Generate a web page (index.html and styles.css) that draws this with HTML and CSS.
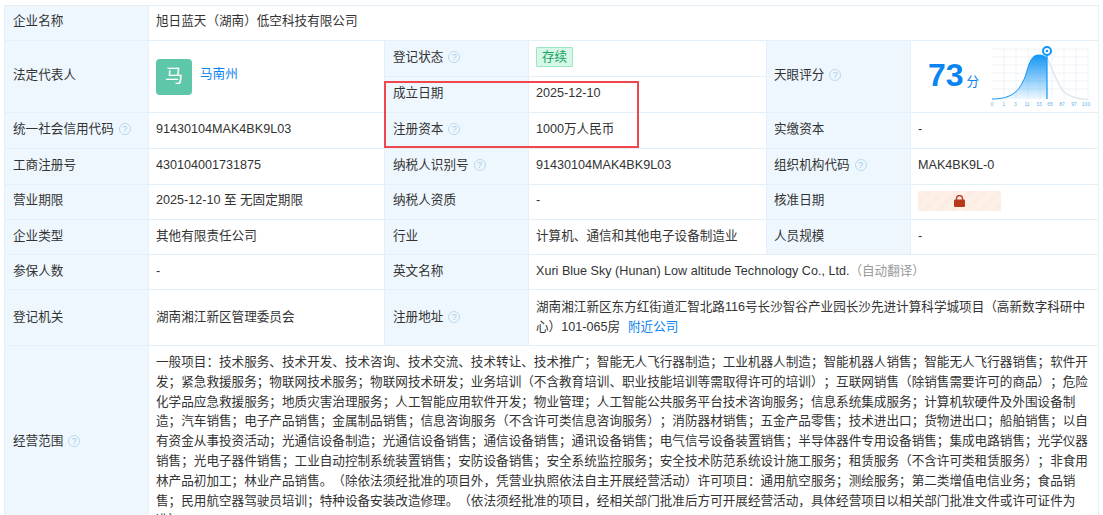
FILE: index.html
```html
<!DOCTYPE html>
<html lang="zh-CN">
<head>
<meta charset="utf-8">
<title>企业信息</title>
<link rel="stylesheet" href="styles.css">
</head>
<body>
<div class="wrap">
<table class="info">
<colgroup>
<col class="c-label"><col class="c-v1"><col class="c-label"><col class="c-v2"><col class="c-label"><col class="c-v3">
</colgroup>
<tbody>
<tr class="r35">
  <th>企业名称</th>
  <td colspan="5">旭日蓝天（湖南）低空科技有限公司</td>
</tr>
<tr class="r36">
  <th rowspan="2">法定代表人</th>
  <td rowspan="2">
    <div class="person"><span class="avatar">马</span><a class="link name" href="#">马南州</a></div>
  </td>
  <th>登记状态<i class="help">?</i></th>
  <td><span class="tag">存续</span></td>
  <th rowspan="2" class="l3">天眼评分<i class="help">?</i></th>
  <td rowspan="2" class="score-cell">
    <div class="score">
      <span class="num">73</span><span class="unit">分</span>
      <svg class="chart" width="106" height="68" viewBox="0 0 106 68">
        <defs>
          <linearGradient id="fill" x1="0" y1="0" x2="0" y2="1">
            <stop offset="0" stop-color="#1296f5"/>
            <stop offset="1" stop-color="#1296f5" stop-opacity="0.06"/>
          </linearGradient>
        </defs>
        <g class="grid">
          <path d="M4 8H100M4 16H100M4 24H100M4 32H100M4 40H100M4 48H100"/>
          <path d="M16 8V58M28 8V58M40 8V58M52 8V58M64 8V58M76 8V58M88 8V58M100 8V58"/>
        </g>
        <path d="M59 17C62 22 66 36 75 50C80 55 88 58 100 58.500" fill="none" stroke="#dfe8ee" stroke-width="1.500"/>
        <path d="M4 58C14 58 20 56 25 53C31 49 34 43 37 36C40 28 42 14 50 14C54 14 57 15 59 17V58Z" fill="url(#fill)"/>
        <path d="M4 58C14 58 20 56 25 53C31 49 34 43 37 36C40 28 42 14 50 14C54 14 57 15 59 17" fill="none" stroke="#1296f5" stroke-width="1"/>
        <path d="M59 12V58" stroke="#1296f5" stroke-width="1.200"/>
        <circle cx="59" cy="10" r="4" fill="#fff" stroke="#1296f5" stroke-width="2"/>
        <circle cx="59" cy="10" r="1.300" fill="#1296f5"/>
        <g class="ticks">
          <text x="4" y="65">0</text><text x="15.700" y="65">1</text><text x="27.400" y="65">3</text><text x="39" y="65">11</text><text x="51" y="65">33</text><text x="62" y="65">65</text><text x="74" y="65">87</text><text x="86" y="65">97</text><text x="98" y="65">100</text>
        </g>
      </svg>
    </div>
  </td>
</tr>
<tr class="r36">
  <th>成立日期</th>
  <td>2025-12-10</td>
</tr>
<tr class="r36">
  <th>统一社会信用代码<i class="help">?</i></th>
  <td>91430104MAK4BK9L03</td>
  <th>注册资本<i class="help">?</i></th>
  <td>1000万人民币</td>
  <th class="l3">实缴资本</th>
  <td>-</td>
</tr>
<tr class="r36">
  <th>工商注册号</th>
  <td>430104001731875</td>
  <th>纳税人识别号<i class="help">?</i></th>
  <td>91430104MAK4BK9L03</td>
  <th class="l3">组织机构代码<i class="help">?</i></th>
  <td>MAK4BK9L-0</td>
</tr>
<tr class="r35">
  <th>营业期限</th>
  <td>2025-12-10 至 无固定期限</td>
  <th>纳税人资质</th>
  <td>-</td>
  <th class="l3">核准日期</th>
  <td>
    <span class="locked">
      <svg width="11" height="12" viewBox="0 0 11 12"><path d="M2.500 5V3.500a3 3 0 0 1 6 0V5" fill="none" stroke="#b8391a" stroke-width="1.400"/><rect x="0" y="4.500" width="11" height="7.500" rx="1" fill="#b8391a"/></svg>
    </span>
  </td>
</tr>
<tr class="r35 low">
  <th>企业类型</th>
  <td>其他有限责任公司</td>
  <th>行业</th>
  <td>计算机、通信和其他电子设备制造业</td>
  <th class="l3">人员规模</th>
  <td>-</td>
</tr>
<tr class="r35 low">
  <th>参保人数</th>
  <td>-</td>
  <th>英文名称</th>
  <td colspan="3">Xuri Blue Sky (Hunan) Low altitude Technology Co., Ltd.<span class="auto">（自动翻译）</span></td>
</tr>
<tr class="r56 low">
  <th>登记机关</th>
  <td>湖南湘江新区管理委员会</td>
  <th>注册地址<i class="help">?</i></th>
  <td colspan="3"><span>湖南湘江新区东方红街道汇智北路116号长沙智谷产业园长沙先进计算科学城项目（高新数字科研中</span><br><span>心）101-065房</span><a class="link near" href="#">附近公司</a></td>
</tr>
<tr class="low">
  <th>经营范围<i class="help">?</i></th>
  <td colspan="5" class="scope">一般项目：技术服务、技术开发、技术咨询、技术交流、技术转让、技术推广；智能无人飞行器制造；工业机器人制造；智能机器人销售；智能无人飞行器销售；软件开发；紧急救援服务；物联网技术服务；物联网技术研发；业务培训（不含教育培训、职业技能培训等需取得许可的培训）；互联网销售（除销售需要许可的商品）；危险化学品应急救援服务；地质灾害治理服务；人工智能应用软件开发；物业管理；人工智能公共服务平台技术咨询服务；信息系统集成服务；计算机软硬件及外围设备制造；汽车销售；电子产品销售；金属制品销售；信息咨询服务（不含许可类信息咨询服务）；消防器材销售；五金产品零售；技术进出口；货物进出口；船舶销售；以自有资金从事投资活动；光通信设备制造；光通信设备销售；通信设备销售；通讯设备销售；电气信号设备装置销售；半导体器件专用设备销售；集成电路销售；光学仪器销售；光电子器件销售；工业自动控制系统装置销售；安防设备销售；安全系统监控服务；安全技术防范系统设计施工服务；租赁服务（不含许可类租赁服务）；非食用林产品初加工；林业产品销售。（除依法须经批准的项目外，凭营业执照依法自主开展经营活动）许可项目：通用航空服务；测绘服务；第二类增值电信业务；食品销售；民用航空器驾驶员培训；特种设备安装改造修理。（依法须经批准的项目，经相关部门批准后方可开展经营活动，具体经营项目以相关部门批准文件或许可证件为准）</td>
</tr>
</tbody>
</table>
<div class="mark"></div>
</div>
</body>
</html>
```

FILE: styles.css
```css
html, body {
  margin: 0;
  height: 100%;
  overflow: hidden;
  background: #fff;
}
body {
  font-family: "Liberation Sans", "Noto Sans CJK SC", sans-serif;
  font-size: 12.6px;
  line-height: 19.8px;
  color: #333;
  text-spacing-trim: space-all;
}
.wrap {
  position: relative;
  padding: 5px 5px 0 4px;
}
.info {
  width: 1094px;
  table-layout: fixed;
  border-collapse: collapse;
}
.c-label { width: 144px; }
.c-v1 { width: 236px; }
.c-v2 { width: 238px; }
.c-v3 { width: 188px; }
.info th, .info td {
  border: 1px solid #e4eff7;
  padding: 0 8px 2px 7px;
  text-align: left;
  font-weight: 400;
  vertical-align: middle;
}
.info th { background: #eef7fe; padding-left: 8px; }
.info th.l3 { padding-left: 7px; }
.info .low th, .info .low td { padding-bottom: 0; }
.r35 { height: 35px; }
.r36 { height: 36px; }
.r56 { height: 56px; }
.info .low .scope { padding-top: 7px; padding-bottom: 7px; }
.help {
  display: inline-block;
  width: 10px;
  height: 10px;
  margin-left: 5px;
  border: 1.5px solid #bcd8ec;
  border-radius: 50%;
  color: #a5cbe6;
  font: 400 9px/10px "Liberation Sans", sans-serif;
  text-align: center;
  vertical-align: 1px;
}
.person { display: flex; align-items: center; gap: 8px; padding-top: 2px; }
.avatar {
  width: 36px;
  height: 36px;
  display: flex;
  align-items: center;
  justify-content: center;
  background: #5fc7a9;
  border-radius: 4px;
  color: #fff;
  font-size: 18px;
}
.link { color: #0a84f0; text-decoration: none; }
.name { padding-bottom: 3px; }
.near { margin-left: 8px; }
.tag {
  display: inline-block;
  padding: 0 5px;
  background: #d6f7e8;
  border: 1px solid #9be6c4;
  border-radius: 1px;
  color: #17a35e;
  line-height: 18px;
}
.info .score-cell { padding: 0; }
.score { display: flex; align-items: center; height: 71px; padding: 0 0 4px 17px; box-sizing: border-box; }
.num { font: 700 32px/36px "Liberation Sans", sans-serif; color: #0a84f0; }
.unit { color: #0a84f0; margin: 17px 0 0 3px; }
.chart { margin: 0 0 0 9px; flex: none; align-self: flex-start; }
.grid path { fill: none; stroke: #eef3f7; stroke-width: 1; }
.ticks text { font: 5px "Liberation Sans", sans-serif; fill: #5fb4ee; text-anchor: middle; }
.locked {
  display: flex;
  width: 83px;
  height: 20px;
  align-items: center;
  justify-content: center;
  border-radius: 1px;
  background: repeating-linear-gradient(135deg, #fdf0e8 0 6px, #fcece3 6px 10px);
}
.auto { color: #999; }
.mark {
  position: absolute;
  left: 384px;
  top: 81px;
  width: 251px;
  height: 63px;
  border: 2px solid #f0474f;
  pointer-events: none;
}
```
